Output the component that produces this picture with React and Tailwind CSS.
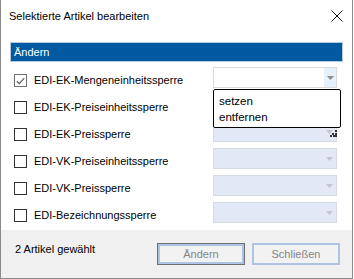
import React from "react";

const rows = [
  { label: "EDI-EK-Mengeneinheitssperre", checked: true, active: true },
  { label: "EDI-EK-Preiseinheitssperre" },
  { label: "EDI-EK-Preissperre" },
  { label: "EDI-VK-Preiseinheitssperre" },
  { label: "EDI-VK-Preissperre" },
  { label: "EDI-Bezeichnungssperre" },
];

function Arrow({ color }) {
  return (
    <svg width="7" height="4" viewBox="0 0 7 4">
      <path d="M0 0h7L3.5 4z" fill={color} />
    </svg>
  );
}

function Checkbox({ checked }) {
  return checked ? (
    <div className="mt-[7px] w-[13px] h-[13px] border border-[#6f6f6f] bg-white flex items-center justify-center shrink-0">
      <svg width="9" height="8" viewBox="0 0 9 8">
        <path d="M0.8 4.2L3.3 6.6L8.3 1.2" fill="none" stroke="#5c5c5c" strokeWidth="1.2" />
      </svg>
    </div>
  ) : (
    <div className="mt-[7px] w-[13px] h-[13px] border border-[#333333] bg-white shrink-0" />
  );
}

function Grip() {
  return (
    <svg width="7" height="7" viewBox="0 0 7 7">
      <rect x="5" y="0" width="2" height="2" fill="#333" />
      <rect x="2" y="3" width="2" height="2" fill="#333" />
      <rect x="5" y="3" width="2" height="2" fill="#333" />
      <rect x="0" y="5" width="2" height="2" fill="#333" />
      <rect x="3" y="5" width="2" height="2" fill="#333" />
      <rect x="5" y="5" width="2" height="2" fill="#333" />
    </svg>
  );
}

function Dropdown({ active, open }) {
  if (active) {
    return (
      <div className="relative w-[124px] h-[21px] border border-[#dadada] bg-white flex justify-end">
        <div className="w-[12px] h-full bg-[#e5f1fb] flex items-center justify-center">
          <Arrow color="#8c8c8c" />
        </div>
        {open && (
          <div className="absolute left-[-1px] top-[21px] w-[128px] h-[40px] z-10 flex flex-col">
            <div className="h-[39px] border border-black rounded-[2px] bg-white pl-[5px] pt-[3px] text-[11.5px] leading-[16px] text-black">
              <div>setzen</div>
              <div>entfernen</div>
            </div>
            <div className="relative">
              <div className="absolute left-[117px] top-[2px]">
                <Grip />
              </div>
            </div>
          </div>
        )}
      </div>
    );
  }
  return (
    <div className="w-[124px] h-[21px] border border-[#d6dbe3] bg-[#e2e8f5] flex justify-end items-center pr-[3px]">
      <Arrow color="#c3c6cc" />
    </div>
  );
}

export default function App() {
  return (
    <div
      className="w-[353px] h-[279px] bg-white border-l border-r border-b border-[#8a8a8a] flex flex-col text-black"
      style={{ fontFamily: '"Liberation Sans", Arial, sans-serif' }}
    >
      <div className="h-[32px] flex items-center justify-between pl-[8px] pr-[9px] shrink-0">
        <span className="text-[11px]">Selektierte Artikel bearbeiten</span>
        <svg width="12" height="12" viewBox="0 0 12 12">
          <path d="M0.5 0.5L11.5 11.5M11.5 0.5L0.5 11.5" stroke="#111" strokeWidth="1" />
        </svg>
      </div>
      <div className="pt-[10px] pl-[9px]">
        <div className="w-[333px] h-[20px] border border-[#b9c9db] bg-[#0059a1] text-white text-[11px] leading-[18px] pl-[3px]">
          Ändern
        </div>
      </div>
      <div className="flex flex-col gap-[6px] pt-[5px] pl-[13px] flex-1">
        {rows.map((r, i) => (
          <div key={r.label} className="flex items-start h-[21px]">
            <Checkbox checked={r.checked} />
            <span className="ml-[7px] mt-[6px] text-[11px] leading-[15px] w-[179px]">{r.label}</span>
            <Dropdown active={r.active} open={i === 0} />
          </div>
        ))}
      </div>
      <div className="h-[48px] bg-[#f0f0f0] flex items-start shrink-0">
        <span className="pl-[14px] pt-[11px] text-[11px] flex-1">2 Artikel gewählt</span>
        <div className="flex gap-[7px] pt-[13px] pr-[12px]">
          <div className="w-[88px] h-[22px] border border-[#6e6e6e] bg-[#f2f2f2] flex">
            <div className="flex-1 border-2 border-[#aec3e3] flex items-center justify-center text-[11px] text-[#858585]">
              Ändern
            </div>
          </div>
          <div className="w-[88px] h-[22px] border-2 border-[#b0c4e2] bg-[#f2f2f2] flex items-center justify-center text-[11px] text-[#858585]">
            Schließen
          </div>
        </div>
      </div>
    </div>
  );
}
